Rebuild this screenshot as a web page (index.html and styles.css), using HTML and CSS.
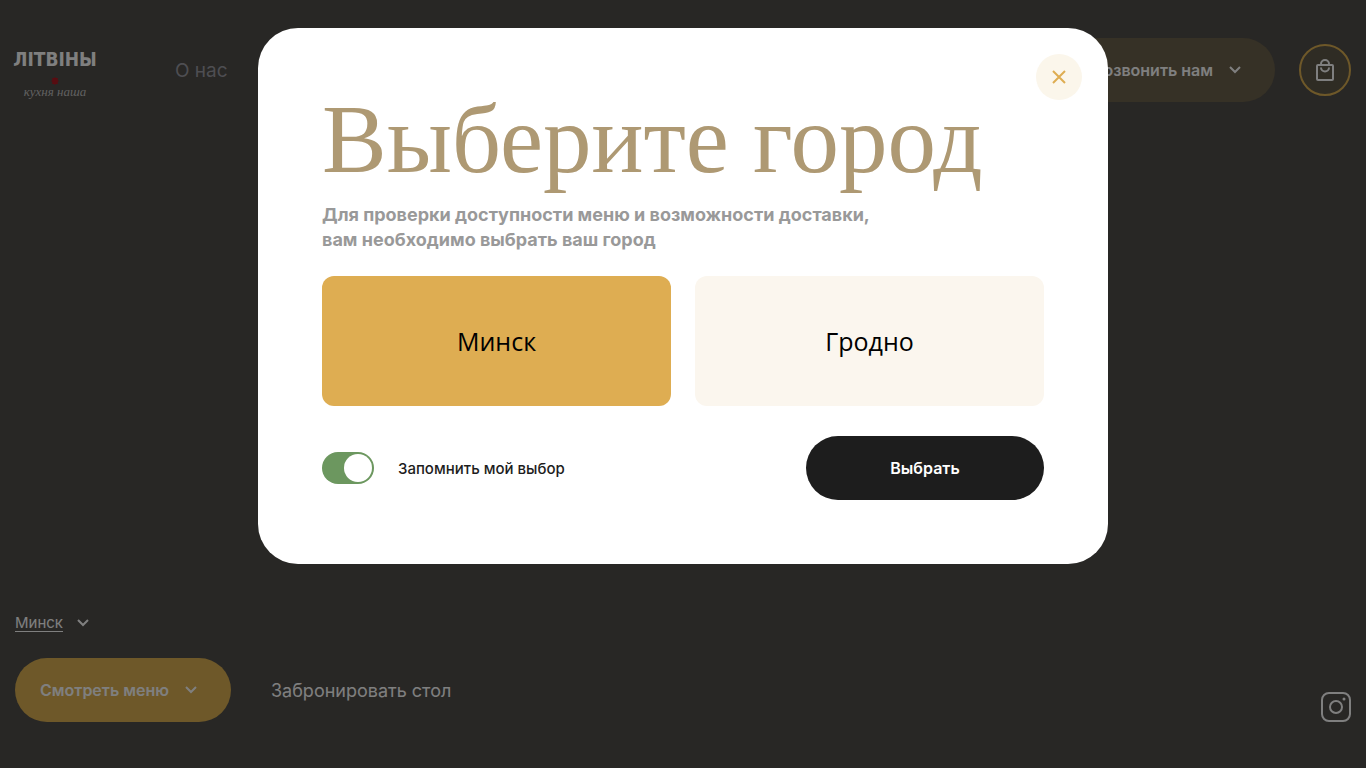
FILE: index.html
```html
<!DOCTYPE html>
<html lang="ru">
<head>
    <meta charset="UTF-8">
    <meta name="viewport" content="width=device-width, initial-scale=1.0">
    <link rel="stylesheet" href="styles.css">
    <title>Літвіны</title>
</head>
<body>

    <div class="page">
        <header class="header">
            <a href="#" class="logo">
                <span class="logo-name">ЛІТВІНЫ</span>
                <svg class="logo-flower" viewBox="0 0 8 8">
                    <path d="M4 0l1 1 2 0-.5 2L8 4 6.500 5l.5 2-2 0L4 8 3 7l-2 0 .5-2L0 4l1.500-1L1 1l2 0z"/>
                </svg>
                <span class="logo-slogan">кухня наша</span>
            </a>
            <nav class="nav">
                <a href="#">О нас</a>
            </nav>
            <button type="button" class="pill pill-call">
                Позвонить нам
                <svg class="chevron" viewBox="0 0 12 8"><path d="M1 1l5 5 5-5"/></svg>
            </button>
            <a href="#" class="cart" aria-label="Корзина">
                <svg viewBox="0 0 18 22">
                    <rect x="1" y="6" width="16" height="15" rx="1"/>
                    <path d="M5 6V5a4 4 0 0 1 8 0v1M5 8.500a4 4 0 0 0 8 0"/>
                </svg>
            </a>
        </header>

        <footer class="bottom">
            <div class="bottom-left">
                <button type="button" class="city">
                    <span class="city-name">Минск</span>
                    <svg class="chevron" viewBox="0 0 12 8"><path d="M1 1l5 5 5-5"/></svg>
                </button>
                <div class="actions">
                    <button type="button" class="pill pill-menu">
                        Смотреть меню
                        <svg class="chevron" viewBox="0 0 12 8"><path d="M1 1l5 5 5-5"/></svg>
                    </button>
                    <a href="#" class="book">Забронировать стол</a>
                </div>
            </div>
            <a href="#" class="instagram" aria-label="Instagram">
                <svg viewBox="0 0 30 30">
                    <rect x="1" y="1" width="28" height="28" rx="7"/>
                    <circle cx="15" cy="15" r="6"/>
                    <circle class="dot" cx="23" cy="7" r="1.500"/>
                </svg>
            </a>
        </footer>
    </div>

    <div class="overlay">
        <form class="modal" role="dialog" aria-labelledby="modalTitle">
            <button type="button" class="close" aria-label="Закрыть">
                <svg viewBox="0 0 14 14"><path d="M1 1l12 12M13 1L1 13"/></svg>
            </button>
            <h1 class="modal-title" id="modalTitle">Выберите город</h1>
            <p class="modal-text">Для проверки доступности меню и возможности доставки,<br>вам необходимо выбрать ваш город</p>
            <div class="cities">
                <input type="radio" name="city" id="minsk" checked>
                <label for="minsk">Минск</label>
                <input type="radio" name="city" id="grodno">
                <label for="grodno">Гродно</label>
            </div>
            <div class="modal-footer">
                <label class="remember">
                    <input type="checkbox" class="switch" checked>
                    Запомнить мой выбор
                </label>
                <button type="button" class="choose">Выбрать</button>
            </div>
        </form>
    </div>

</body>
</html>
```
FILE: styles.css
```css
* {
    box-sizing: border-box;
}

body {
    margin: 0;
    font-family: Inter, "Open Sans", sans-serif;
    font-size: 16px;
    color: #ffffff;
    background-color: #504e4a;
}

a {
    color: inherit;
    text-decoration: none;
}

button {
    font-family: inherit;
    border: none;
    cursor: pointer;
}

svg {
    display: block;
    fill: none;
    stroke: currentColor;
    stroke-width: 2;
}

.page {
    min-height: 100vh;
    display: flex;
    flex-direction: column;
    justify-content: space-between;
    padding: 38px 15px 46px;
}

.header {
    display: flex;
    align-items: center;
    gap: 24px;
}

.logo {
    display: flex;
    flex-direction: column;
    align-items: center;
    width: 80px;
}

.logo-name {
    font-family: "DejaVu Sans Condensed", "Open Sans", sans-serif;
    font-size: 19px;
    font-weight: 700;
    line-height: 36px;
}

.logo-flower {
    width: 8px;
    height: 8px;
    fill: #b01822;
    stroke: none;
}

.logo-slogan {
    font-family: "Liberation Serif", serif;
    font-style: italic;
    font-size: 13px;
    line-height: 14px;
    color: #c0c0c0;
}

.nav {
    flex: 1;
    padding-left: 56px;
    font-size: 19px;
    color: #9c9ca4;
}

.pill {
    display: flex;
    align-items: center;
    gap: 16px;
    height: 64px;
    padding: 0 34px 0 25px;
    border-radius: 32px;
    font-size: 16px;
    font-weight: 600;
    color: #ffffff;
}

.pill-call {
    background-color: #6c624c;
}

.pill-menu {
    background-color: #dcb052;
}

.chevron {
    width: 12px;
    height: 8px;
}

.cart {
    display: flex;
    align-items: center;
    justify-content: center;
    width: 52px;
    height: 52px;
    border: 2px solid #dcb052;
    border-radius: 50%;
    background-color: #5e5849;
}

.cart svg {
    width: 18px;
    height: 22px;
}

.bottom {
    display: flex;
    align-items: flex-end;
    justify-content: space-between;
}

.city {
    display: flex;
    align-items: center;
    gap: 14px;
    padding: 0;
    margin-bottom: 26px;
    font-size: 15px;
    color: #ffffff;
    background: none;
}

.city-name {
    line-height: 17px;
    border-bottom: 1px solid #ffffff;
}

.actions {
    display: flex;
    align-items: center;
    gap: 40px;
}

.book {
    font-size: 18px;
}

.instagram svg {
    width: 30px;
    height: 30px;
}

.instagram .dot {
    fill: currentColor;
    stroke: none;
}

/* modal */
.overlay {
    position: fixed;
    inset: 0;
    display: flex;
    align-items: flex-start;
    justify-content: center;
    padding: 28px 15px;
    overflow: auto;
    background-color: rgba(0, 0, 0, 0.5);
}

.modal {
    position: relative;
    width: 100%;
    max-width: 850px;
    padding: 64px;
    border-radius: 40px;
    background-color: #ffffff;
    color: #1d1d1d;
}

.close {
    position: absolute;
    top: 26px;
    right: 26px;
    display: flex;
    align-items: center;
    justify-content: center;
    width: 46px;
    height: 46px;
    padding: 0;
    border-radius: 50%;
    color: #dead52;
    background-color: #fbf6eb;
}

.close svg {
    width: 14px;
    height: 14px;
}

.modal-title {
    margin: 0 0 14px;
    font-family: "Liberation Serif", serif;
    font-size: 97px;
    font-weight: 400;
    line-height: 96px;
    color: #ae9973;
}

.modal-text {
    margin: 0 0 24px;
    font-size: 18px;
    font-weight: 700;
    line-height: 25px;
    color: #999999;
}

.cities {
    display: flex;
    gap: 24px;
    margin-bottom: 30px;
}

.cities input {
    position: absolute;
    opacity: 0;
}

.cities label {
    flex: 1;
    display: flex;
    align-items: center;
    justify-content: center;
    height: 130px;
    border-radius: 12px;
    font-family: "Open Sans", sans-serif;
    font-size: 25px;
    font-weight: 500;
    color: #000000;
    background-color: #fbf6ee;
    cursor: pointer;
}

.cities input:checked + label {
    background-color: #dead52;
}

.modal-footer {
    display: flex;
    align-items: center;
    justify-content: space-between;
}

.remember {
    display: flex;
    align-items: center;
    gap: 24px;
    font-size: 15px;
    font-weight: 500;
    cursor: pointer;
}

.switch {
    appearance: none;
    display: flex;
    width: 52px;
    height: 32px;
    margin: 0;
    padding: 2px;
    border-radius: 16px;
    background-color: #cccccc;
    cursor: pointer;
}

.switch::before {
    content: "";
    width: 28px;
    height: 28px;
    border-radius: 50%;
    background-color: #ffffff;
}

.switch:checked {
    justify-content: flex-end;
    background-color: #6c975f;
}

.choose {
    width: 238px;
    height: 64px;
    border-radius: 32px;
    font-size: 16px;
    font-weight: 600;
    color: #ffffff;
    background-color: #1d1d1d;
}
```
